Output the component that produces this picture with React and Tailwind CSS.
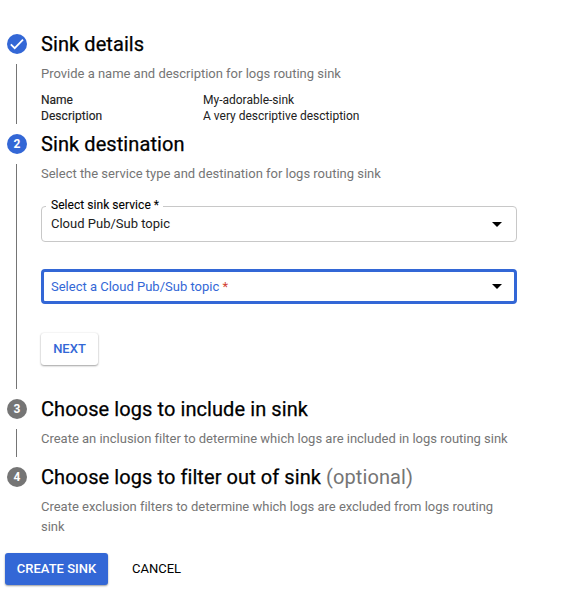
import React from "react";

function Step({ marker, active, title, optional, description, height, last, children }) {
  return (
    <li className={`flex ${height}`}>
      <div className="flex w-5 shrink-0 flex-col items-center">
        <span
          className={`flex size-5 shrink-0 items-center justify-center rounded-full text-[12px] font-bold leading-5 text-white ${
            active ? "bg-[#3367d6]" : "bg-[#757575]"
          }`}
        >
          {marker}
        </span>
        {!last && <span className="mt-2.5 mr-px mb-2.5 w-px grow bg-[#757575]" />}
      </div>
      <div className="ml-3.5 w-[476px]">
        <h2 className="text-[20px] font-normal leading-5 tracking-[0.08px] whitespace-nowrap text-black [-webkit-text-stroke:0.25px_currentColor]">
          {title}
          {optional && <span className="text-[#757575] [-webkit-text-stroke:0]"> (optional)</span>}
        </h2>
        <p className="mt-2.5 text-[13px] leading-5 tracking-[-0.01px] text-[#757575]">{description}</p>
        {children}
      </div>
    </li>
  );
}

function Check() {
  return (
    <svg viewBox="0 0 20 20" className="size-5" fill="none" stroke="white" strokeWidth="1.8">
      <path d="M3.8 10.4 7.7 14.2 16 5.7" />
    </svg>
  );
}

function Caret() {
  return (
    <svg viewBox="0 0 10 5" className="h-[5px] w-2.5" fill="black">
      <path d="M0 0h10L5 5z" />
    </svg>
  );
}

export default function App() {
  return (
    <main className="h-[614px] w-[580px] bg-white pt-[34px] font-[Roboto,sans-serif]">
      <ol className="pl-[7px]">
        <Step
          height="h-[100px]"
          marker={<Check />}
          active
          title="Sink details"
          description="Provide a name and description for logs routing sink"
        >
          <dl className="mt-2 grid grid-cols-[162px_1fr] text-[12px] leading-4 text-[#212121]">
            <dt className="[-webkit-text-stroke:0.15px_currentColor]">Name</dt>
            <dd>My-adorable-sink</dd>
            <dt className="tracking-[0.05px] [-webkit-text-stroke:0.15px_currentColor]">Description</dt>
            <dd>A very descriptive desctiption</dd>
          </dl>
        </Step>
        <Step
          height="h-[265px]"
          marker="2"
          active
          title="Sink destination"
          description="Select the service type and destination for logs routing sink"
        >
          <fieldset className="mt-[14px] h-11 rounded-[4px] border border-[#c8c8c8] pr-[14px] pl-1">
            <legend className="h-4 pr-1 pl-[5px] text-[12px] leading-[14px] tracking-[0.05px] text-black [-webkit-text-stroke:0.1px_currentColor]">
              Select sink service *
            </legend>
            <div className="flex h-5 items-center justify-between pl-[5px] text-[13px] text-[#212121]">
              Cloud Pub/Sub topic
              <Caret />
            </div>
          </fieldset>
          <div className="mt-[27px] flex h-[35px] items-center justify-between rounded-[4px] border-[3px] border-[#3367d6] pr-3 pl-[7px] text-[13px] text-[#3367d6]">
            <span>
              Select a Cloud Pub/Sub topic <span className="text-[#d23f31]">*</span>
            </span>
            <Caret />
          </div>
          <button className="mt-[29px] h-8 w-[57px] rounded-[3px] bg-white text-[13px] font-medium text-[#3367d6] shadow-[0_1px_2px_rgba(0,0,0,0.35),0_0_2px_rgba(0,0,0,0.1)]">
            NEXT
          </button>
        </Step>
        <Step
          height="h-[68px]"
          marker="3"
          title="Choose logs to include in sink"
          description="Create an inclusion filter to determine which logs are included in logs routing sink"
        />
        <Step
          height="h-[86px]"
          marker="4"
          last
          title="Choose logs to filter out of sink"
          optional
          description="Create exclusion filters to determine which logs are excluded from logs routing sink"
        />
      </ol>
      <div className="flex pl-[5px]">
        <button className="h-8 w-[103px] rounded-[3px] bg-[#3367d6] text-[13px] font-medium text-white shadow-[0_1px_2px_rgba(0,0,0,0.4)]">
          CREATE SINK
        </button>
        <button className="ml-3 h-8 px-3 text-[13px] text-black">CANCEL</button>
      </div>
    </main>
  );
}
